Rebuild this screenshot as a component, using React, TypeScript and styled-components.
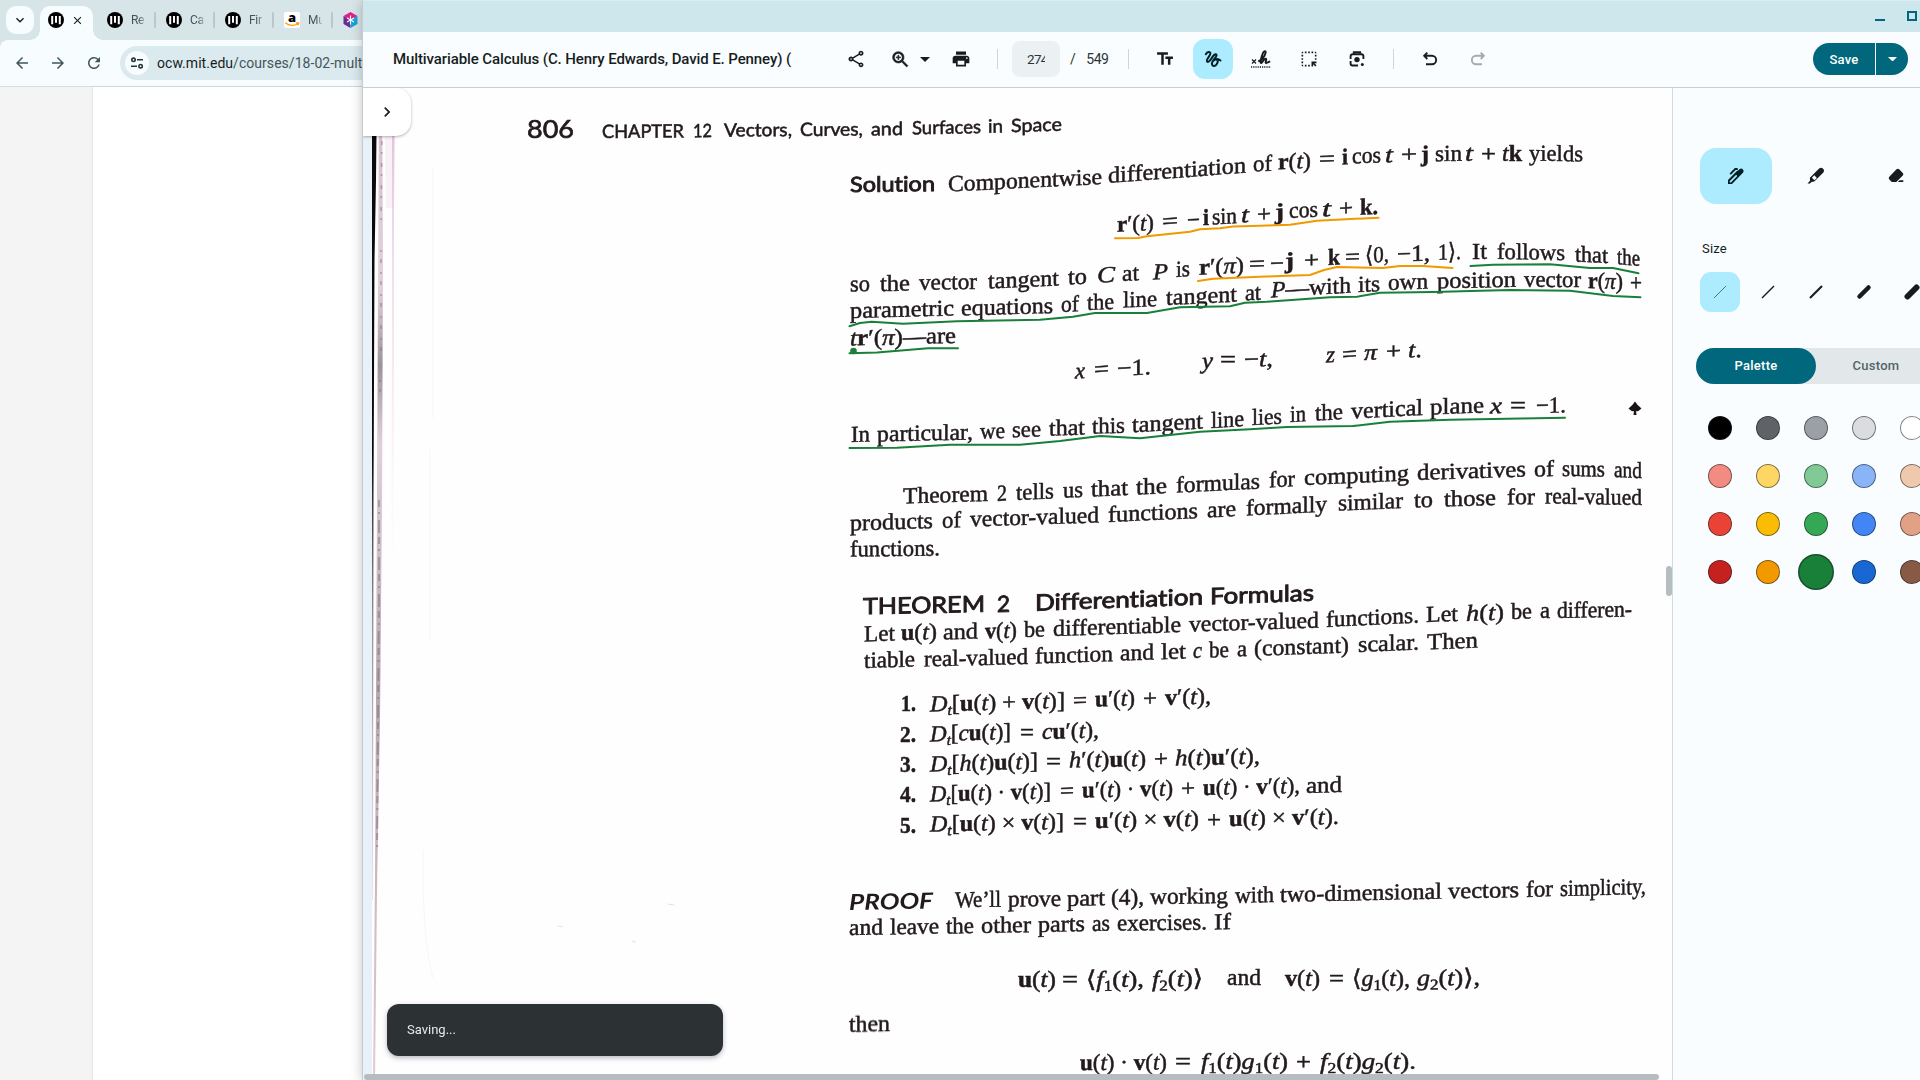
import React from 'react';
import styled, { createGlobalStyle } from 'styled-components';
import {
  MdArrowBack, MdArrowForward, MdChevronRight, MdClose, MdHighlightAlt,
  MdKeyboardArrowDown, MdOutlineShare, MdPrint, MdRefresh, MdTextFields, MdZoomIn,
} from 'react-icons/md';

const GlobalStyle = createGlobalStyle`
  * { box-sizing: border-box; }
  body { margin: 0; overflow: hidden; font-family: Roboto, "Liberation Sans", sans-serif; color: #171d1e; }
  button { font: inherit; color: inherit; border: 0; padding: 0; background: none; }
  svg { display: block; flex: none; }
`;

const Desktop = styled.div`
  position: relative;
  width: 1920px;
  height: 1080px;
  overflow: hidden;
`;

/* ---------- browser window ---------- */

const Browser = styled.section`
  display: flex;
  flex-direction: column;
  width: 100%;
  height: 100%;
  background: #d7e4e8;
`;
const TabStrip = styled.div`
  display: flex;
  height: 40px;
  padding: 6px 0 0 6px;
`;
const TabSearch = styled.button`
  display: grid;
  place-items: center;
  width: 28px;
  height: 28px;
  border-radius: 10px;
  background: #f7fcff;
`;
const ActiveTab = styled.div`
  position: relative;
  display: flex;
  align-items: center;
  gap: 7px;
  width: 53px;
  height: 34px;
  margin: 0 14px 0 6px;
  padding: 0 8px 6px;
  border-radius: 10px 10px 0 0;
  background: #f7fcff;
  &::before, &::after {
    content: "";
    position: absolute;
    bottom: 0;
    width: 10px;
    height: 10px;
  }
  &::before { left: -10px; background: radial-gradient(circle at 0 0, transparent 9.5px, #f7fcff 10px); }
  &::after { right: -10px; background: radial-gradient(circle at 100% 0, transparent 9.5px, #f7fcff 10px); }
`;
const Tab = styled.div`
  display: flex;
  align-items: center;
  width: 59px;
  height: 28px;
`;
const TabTitle = styled.span`
  width: 14px;
  margin-left: 8px;
  margin-right: 9px;
  overflow: hidden;
  white-space: nowrap;
  font-size: 12px;
  letter-spacing: -.3px;
  color: #40545b;
  mask-image: linear-gradient(90deg, #000 55%, rgba(0, 0, 0, .25));
`;
const TabDivider = styled.i`
  width: 2px;
  height: 16px;
  border-radius: 1px;
  background: #bac6ca;
`;
const AddressRow = styled.div`
  display: flex;
  align-items: center;
  height: 47px;
  padding-left: 13px;
  gap: 18px;
  color: #40555c;
  background: #f7fcff;
  border-radius: 8px 0 0 0;
  border-bottom: 1px solid #cfe0e6;
`;
const AddressBar = styled.div`
  display: flex;
  align-items: center;
  flex: 1;
  height: 34px;
  margin-left: -1px;
  padding-left: 5px;
  gap: 8px;
  border-radius: 17px;
  background: #dbeaef;
  font-size: 14px;
  letter-spacing: .04px;
  color: #455559;
  b { font-weight: 400; color: #171d1e; }
`;
const SiteInfo = styled.span`
  display: grid;
  place-items: center;
  width: 24px;
  height: 24px;
  border-radius: 50%;
  background: #f7fcff;
`;
const WebPage = styled.div`
  flex: 1;
  display: flex;
  padding-left: 93px;
  background: #f4f4f4;
`;
const WebPageBody = styled.div`
  flex: 1;
  background: #fff;
  box-shadow: 0 0 2px #ccc;
`;

/* ---------- document viewer window ---------- */

const Viewer = styled.section`
  position: absolute;
  inset: 0 0 0 363px;
  display: flex;
  flex-direction: column;
  background: #f9fdff;
  box-shadow: 0 0 0 1px #c4cccf, 0 2px 12px rgba(0, 0, 0, .28);
`;
const TitleBar = styled.header`
  display: flex;
  justify-content: flex-end;
  align-items: flex-start;
  gap: 22px;
  height: 32px;
  padding: 10px 3px 0 0;
  border-top: 1px solid #dcebf0;
  background: #cee7ed;
`;
const Minimize = styled.i`
  width: 10px;
  height: 2px;
  margin-top: 8px;
  background: #00677c;
`;
const Maximize = styled.i`
  width: 10px;
  height: 10px;
  border: 2px solid #00677c;
`;
const Toolbar = styled.div`
  display: flex;
  align-items: center;
  height: 56px;
  padding: 0 12px 1px 30px;
  border-bottom: 1px solid #c5d0d4;
`;
const FileName = styled.h1`
  width: 403px;
  margin: 0 40px 0 0;
  white-space: nowrap;
  font: 500 15px Roboto, sans-serif;
  letter-spacing: -.105px;
`;
const Tool = styled.button<{ $active?: boolean; $muted?: boolean; $width?: number }>`
  display: flex;
  justify-content: center;
  align-items: center;
  width: ${p => p.$width ?? 40}px;
  height: 40px;
  border-radius: 12px;
  background: ${p => (p.$active ? '#adebff' : 'transparent')};
  color: ${p => (p.$muted ? '#a4abad' : '#171d1e')};
`;
const ZoomTool = styled(Tool)`
  gap: 9px;
  padding-left: 3px;
  svg:first-child path:not([fill="none"]) { stroke: currentColor; stroke-width: .7px; }
`;
const ToolGroup = styled.div<{ $left: number }>`
  display: flex;
  align-items: center;
  gap: 8px;
  margin-left: ${p => p.$left}px;
`;
const Divider = styled.i<{ $left: number }>`
  width: 1px;
  height: 20px;
  margin-left: ${p => p.$left}px;
  background: #ccd6da;
`;
const PageField = styled.div`
  width: 48px;
  height: 36px;
  margin-left: 14px;
  padding: 0 15px;
  border-radius: 8px;
  background: #ebf0f2;
  font-size: 13.5px;
  line-height: 36px;
  letter-spacing: -.7px;
  color: #2c3436;
  span { display: block; overflow: hidden; }
`;
const PageTotal = styled.div`
  display: flex;
  gap: 11px;
  width: 39px;
  margin-left: 10px;
  font-size: 14px;
  letter-spacing: -.5px;
  color: #2c3436;
`;
const SaveGroup = styled.div`
  display: flex;
  gap: 1px;
  height: 32px;
  margin-left: auto;
`;
const SaveButton = styled.button<{ $menu?: boolean }>`
  display: grid;
  place-items: center;
  width: ${p => (p.$menu ? 32 : 62)}px;
  border-radius: ${p => (p.$menu ? '0 16px 16px 0' : '16px 0 0 16px')};
  background: #00677c;
  color: #fff;
  font-size: 13px;
  font-weight: 500;
  letter-spacing: .2px;
`;
const Workspace = styled.div`
  flex: 1;
  display: flex;
  min-height: 0;
  overflow: hidden;
`;
const Canvas = styled.main`
  position: relative;
  flex: none;
  width: 1309px;
  padding-left: 9px;
  overflow: hidden;
  background: #e7f1f7;
`;
const ExpandTab = styled.button`
  position: absolute;
  left: 0;
  top: 0;
  display: grid;
  place-items: center;
  width: 48px;
  height: 48px;
  border-radius: 0 15px 15px 0;
  background: #fff;
  box-shadow: 0 1px 3px rgba(0, 0, 0, .3);
`;
const Toast = styled.div`
  position: absolute;
  left: 24px;
  bottom: 24px;
  width: 336px;
  height: 52px;
  padding-left: 20px;
  border-radius: 12px;
  background: #2c3134;
  box-shadow: 0 2px 5px rgba(60, 50, 80, .35);
  font-size: 13px;
  line-height: 51px;
  color: #e4eaec;
`;
const ScrollThumb = styled.i<{ $vertical?: boolean }>`
  position: absolute;
  ${p => (p.$vertical
    ? 'right: 0; top: 478px; width: 6px; height: 30px;'
    : 'left: 1px; bottom: 0; width: 1295px; height: 6px;')}
  border-radius: 3px;
  background: #b5bdc0;
`;

/* ---------- annotation side panel ---------- */

const Panel = styled.aside`
  width: 272px;
  flex: none;
  padding: 60px 0 0 23px;
  border-left: 1px solid #d0dbdf;
`;
const Row = styled.div`
  display: flex;
  gap: 8px;
  padding-left: 4px;
`;
const PenOption = styled.button<{ $active?: boolean }>`
  display: grid;
  place-items: center;
  flex: none;
  width: 72px;
  height: 56px;
  border-radius: 16px;
  background: ${p => (p.$active ? '#adebff' : 'transparent')};
`;
const PanelLabel = styled.h2`
  margin: 37px 0 15px 6px;
  font: 400 13px/16px Roboto, sans-serif;
  letter-spacing: .2px;
`;
const SizeOption = styled(PenOption)`
  width: 40px;
  height: 40px;
  border-radius: 11px;
`;
const Tabs = styled.div`
  display: flex;
  width: 240px;
  height: 36px;
  margin: 36px 0 32px;
  border-radius: 18px;
  background: #e2e8ea;
`;
const PanelTab = styled.button<{ $active?: boolean }>`
  width: 120px;
  padding-bottom: 1px;
  border-radius: 18px;
  background: ${p => (p.$active ? '#00677c' : 'transparent')};
  color: ${p => (p.$active ? '#fff' : '#536469')};
  font-size: 13px;
  font-weight: 500;
  letter-spacing: .25px;
`;
const Swatches = styled.div`
  display: grid;
  grid-template-columns: repeat(5, 24px);
  grid-auto-rows: 24px;
  gap: 24px;
  padding-left: 12px;
`;
const Swatch = styled.button<{ $color: string; $active?: boolean }>`
  border-radius: 50%;
  border: 1px solid rgba(30, 35, 40, .55);
  background: ${p => p.$color};
  background-clip: border-box;
  transform: ${p => (p.$active ? 'scale(1.5)' : 'none')};
`;

/* ---------- icons ---------- */

const MitIcon = () => (
  <svg width="16" height="16" viewBox="0 0 16 16">
    <circle cx="8" cy="8" r="8" fill="#000" />
    <path d="M4.200 4v8.200M8 4v6.800M11.800 4v8.200" stroke="#fff" strokeWidth="2" />
  </svg>
);
const ShopIcon = () => (
  <svg width="16" height="16" viewBox="0 0 16 16">
    <rect width="16" height="16" rx="2" fill="#fff" />
    <text x="8" y="10" textAnchor="middle" fontFamily="Open Sans" fontWeight="800" fontSize="13">a</text>
    <path d="M1.300 10.800c4 3.400 9 3.300 12.300 1M12 10.800h2.700l-.8 2.500" fill="none" stroke="#f90" strokeWidth="1.300" />
  </svg>
);
const CubeIcon = () => (
  <svg width="15" height="16" viewBox="0 0 15 16">
    <path d="M7.500 0 14.500 4 7.500 8 .5 4z" fill="#e0218a" />
    <path d="M.5 4 7.500 8v8L.5 12z" fill="#6a2c91" />
    <path d="M14.500 4 7.500 8v8l7-4z" fill="#12a5d8" />
    <path d="M7.500 3.500v9M4 6l7 4M11 6l-7 4" stroke="#fff" strokeWidth="1.100" />
  </svg>
);
const TuneIcon = () => (
  <svg width="14" height="14" viewBox="0 0 14 14" fill="none" stroke="#26363b" strokeWidth="1.600">
    <circle cx="3.500" cy="3.800" r="1.700" /><path d="M7 3.800h6M1 10.200h6" /><circle cx="10.600" cy="10.200" r="1.700" />
  </svg>
);
const InkIcon = () => (
  <svg width="20" height="20" viewBox="0 0 20 20" fill="none" stroke="#001f27" strokeWidth="2" strokeLinecap="round" strokeLinejoin="round">
    <path d="M2.800 5.200C4.300 2.800 7.300 2.200 7.400 4.400 7.500 6.700 3.600 9.300 3.900 11.900c.3 2.400 3.200.2 4.900-2.800C10.200 6.500 12.600 4.200 13.500 5.700c1 1.900-4.900 6-4.600 9.200.2 2.500 3 2.700 4.500.8 1.400-1.800 1.600-4 .9-5.400M10.300 11.700c2.300-1.800 5.400-1.700 7.200-.2" />
  </svg>
);
const SignatureIcon = () => (
  <svg width="22" height="20" viewBox="0 0 22 20" fill="none" stroke="#171d1e">
    <path d="M2 10.500l4 4m0-4-4 4" strokeWidth="1.200" />
    <path d="M8.300 12.500c3.500-1.300 6.700-5.500 7.300-8.900.4-2.100-1.700-1.900-2.600.4-1 2.500-2.400 6.500-2.300 9.200.1 1.600 1.200.3 2-.8 1-1.500 2.500-3.200 3.400-2.500.9.800-1.300 3.300-.3 3.900 1.100.5 2.500-.7 4.400-1.400" strokeWidth="2" />
    <path d="M1 18h20" strokeWidth="1.500" strokeDasharray="1.200 1" />
  </svg>
);
const LensIcon = () => (
  <svg width="20" height="20" viewBox="0 0 20 20" fill="none" stroke="#171d1e" strokeWidth="1.900">
    <path d="M3.600 10V7.200a2 2 0 0 1 2-2h8.800a2 2 0 0 1 2 2V10M3.600 12v2.500a2 2 0 0 0 2 2H11" />
    <path d="M6.800 4.800V3.300h6.400v1.500" /><circle cx="10" cy="10.600" r="2.700" fill="#171d1e" stroke="none" />
    <circle cx="15.300" cy="15.500" r="1.500" fill="#171d1e" stroke="none" />
  </svg>
);
const UndoIcon = ({ flip = false }: { flip?: boolean }) => (
  <svg width="20" height="20" viewBox="0 0 20 20" fill="none" stroke="currentColor" strokeWidth="1.900" transform={flip ? 'scale(-1 1)' : undefined}>
    <path d="M7.300 3.600 4.200 6.800l3.100 3.200M4.700 6.800h7.200a4.200 4.200 0 0 1 0 8.500H6" />
  </svg>
);
const Caret = () => <svg width="10" height="5" viewBox="0 0 10 5"><path d="M0 0h10L5 5z" fill="currentColor" /></svg>;
const SmallCaret = () => <svg width="9" height="4.500" viewBox="0 0 10 5"><path d="M0 0h10L5 5z" fill="currentColor" /></svg>;
const PenIcon = () => (
  <svg width="18" height="18" viewBox="0 0 18 18">
    <path d="M1 17v-4L10.200 3.800l.9-.2 1.700-1.700a2.600 2.600 0 0 1 3.400 3.700L5 17z" fill="#001f27" />
    <path d="M3.200 7.200 8.300 2h2.400" fill="none" stroke="#001f27" strokeWidth="1.800" />
    <path d="m3 15.100 6.700-6.800" stroke="#adebff" strokeWidth="1.700" />
  </svg>
);
const MarkerIcon = () => (
  <svg width="18" height="18" viewBox="0 0 18 18">
    <path d="M.5 16.500 3 13.700l-.1-3L10.600 3l1.900-1.700c1.200-.9 2.500-.6 3.600.5s1.200 2.500.3 3.600L7.300 14.600l-3 .3-1.200 1.600z" fill="#171d1e" />
    <path d="m7.300 8.300 2.600 2.600-2.400 2.300-2.600-2.500z" fill="#f9fdff" />
  </svg>
);
const EraserIcon = () => (
  <svg width="18" height="18" viewBox="0 0 18 18">
    <path d="M9.500 2.300a2 2 0 0 1 2.700 0l3.600 3.600a2 2 0 0 1 0 2.700L9.300 15H4.800l-2.500-2.500a2 2 0 0 1 0-2.700zM10.800 15l1.900-1.800h3.600V15z" fill="#171d1e" />
  </svg>
);

/* ---------- scanned page ---------- */

type Run = [x1: number, y1: number, x2: number, y2: number, text: string];

const headings: Run[] = [
  [602, 138, 684, 137.400, 'CHAPTER'], [693, 137.500, 712, 137, '12'], [724, 136.700, 792, 136, 'Vectors,'],
  [800, 136, 863, 135.500, 'Curves,'], [871, 135.500, 903, 135, 'and'], [912, 134.500, 981, 133.200, 'Surfaces'],
  [988, 132.800, 1003, 132.300, 'in'], [1011, 132.300, 1062, 130.700, 'Space'],
];
const boldHeadings: Run[] = [
  [863, 614.300, 985, 611.800, 'THEOREM'], [997, 612, 1010, 611.700, '2'], [1035, 610.700, 1203, 604.500, 'Differentiation'], [1210, 604.300, 1314, 600.500, 'Formulas'],
];

/* Markup in the runs: *bold*, _italic_, ~subscript~ */
const body: Run[] = [
  [948, 191.500, 1102, 184, 'Componentwise'], [1108, 183, 1246, 172.500, 'differentiation'], [1253, 171.500, 1272, 170.500, 'of'],
  [1278, 169.300, 1311, 168, '*r*(_t_)'], [1319, 166.500, 1335, 166, '='], [1342, 164.500, 1348, 164.300, '*i*'], [1352, 163.500, 1381, 162.300, 'cos'], [1385, 162.500, 1393, 162, '_t_'],
  [1401, 162, 1417, 161.500, '+'], [1421, 161.500, 1429, 161.300, '*j*'], [1435, 161.300, 1462, 160.700, 'sin'], [1465, 160.700, 1473, 160.500, '_t_'],
  [1481, 160.500, 1496, 160.500, '+'], [1502, 160.500, 1522, 160.500, '_t_*k*'], [1529, 160.500, 1583, 161.500, 'yields'],

  [1117, 231.700, 1154, 230, '*r*′(_t_)'], [1162, 229, 1178, 228, '='], [1187, 227.500, 1200, 227, '−'], [1203, 225, 1209, 225, '*i*'], [1212, 224.500, 1237, 223, 'sin'], [1241, 222.500, 1249, 222, '_t_'],
  [1257, 222, 1271, 221, '+'], [1275, 219.500, 1284, 219, '*j*'], [1289, 218, 1318, 216.500, 'cos'], [1322, 216.500, 1331, 216, '_t_'], [1339, 216, 1353, 215, '+'], [1360, 214.700, 1378, 214, '*k.*'],

  [850, 291.500, 870, 291, 'so'], [880, 291, 910, 290.500, 'the'], [919, 290, 977, 288.800, 'vector'], [988, 288.500, 1059, 285.500, 'tangent'], [1068, 284.500, 1087, 283.500, 'to'],
  [1097, 282.500, 1115, 282, '_C_'], [1122, 281, 1139, 280, 'at'], [1153, 279.500, 1168, 279, '_P_'], [1176, 277, 1190, 276, 'is'],
  [1199, 274.700, 1244, 272.500, '*r*′(_π_)'], [1249, 271.500, 1265, 271, '='], [1270, 271, 1284, 270.500, '−'], [1285, 268.500, 1294, 268, '*j*'], [1304, 268, 1319, 267, '+'], [1328, 265, 1340, 264.500, '*k*'],
  [1345, 264.500, 1360, 264, '='], [1365, 263, 1389, 261.500, '⟨0,'], [1397, 261.500, 1430, 260.500, '−1,'], [1438, 259.700, 1461, 259, '1⟩.'],
  [1472, 258.700, 1487, 258.700, 'It'], [1497, 258.700, 1565, 260.300, 'follows'], [1575, 261.500, 1608, 263, 'that'], [1617, 264, 1640, 266, 'the'],

  [850, 318, 954, 315.500, 'parametric'], [961, 315.500, 1053, 313, 'equations'], [1061, 312, 1079, 311, 'of'], [1087, 310, 1114, 309, 'the'], [1123, 307.500, 1157, 306, 'line'],
  [1166, 305, 1237, 301.500, 'tangent'], [1245, 300.500, 1261, 299.500, 'at'], [1271, 297.500, 1351, 292.500, '_P_—with'], [1358, 292, 1380, 291, 'its'], [1388, 290, 1428, 288.500, 'own'],
  [1437, 288.300, 1516, 286.800, 'position'], [1524, 286.800, 1581, 287, 'vector'], [1588, 288, 1623, 289, '*r*(_π_)'], [1630, 290, 1642, 290, '+'],
  [850, 345.500, 903, 344.500, '_t_*r*′(_π_)'], [903, 344.500, 926, 343.500, '—'], [926, 343.500, 956, 343, 'are'],

  [1075, 378.500, 1085, 378, '_x_'], [1094, 377, 1109, 376, '='], [1117, 376, 1151, 374, '−1.'],
  [1202, 368.500, 1213, 368, '_y_'], [1220, 367, 1236, 367, '='], [1244, 367, 1273, 366, '−_t_,'],
  [1326, 362.500, 1335, 362, '_z_'], [1342, 362, 1357, 361, '='], [1364, 360, 1377, 359.500, '_π_'], [1386, 359, 1401, 358, '+'], [1408, 357.500, 1422, 357, '_t_.'],

  [851, 442, 870, 441.500, 'In'], [877, 441.500, 973, 439.500, 'particular,'], [980, 438.700, 1005, 438, 'we'], [1012, 437.300, 1041, 436.300, 'see'], [1049, 435.800, 1085, 434.500, 'that'],
  [1092, 433.800, 1125, 432.600, 'this'], [1132, 432.300, 1203, 428.500, 'tangent'], [1211, 428, 1244, 426, 'line'], [1252, 425, 1282, 423.500, 'lies'], [1290, 422, 1306, 421, 'in'],
  [1315, 420.500, 1343, 419, 'the'], [1351, 418.500, 1423, 415, 'vertical'], [1430, 414.500, 1484, 412.500, 'plane'], [1490, 413.500, 1502, 413, '_x_'], [1510, 413, 1526, 413, '='], [1536, 413, 1566, 412.500, '−1.'],

  [903, 503.500, 988, 501, 'Theorem'], [997, 501, 1007, 500.500, '2'], [1016, 500, 1054, 498.500, 'tells'], [1063, 497.800, 1083, 497, 'us'], [1091, 496.500, 1128, 495, 'that'],
  [1136, 494.500, 1167, 493, 'the'], [1176, 492.500, 1260, 488.500, 'formulas'], [1269, 487.500, 1295, 486, 'for'], [1304, 485, 1409, 480.500, 'computing'],
  [1417, 480, 1526, 476.500, 'derivatives'], [1534, 476.500, 1554, 476, 'of'], [1562, 476, 1605, 476.500, 'sums'], [1614, 477, 1642, 478, 'and'],
  [850, 530.500, 933, 528, 'products'], [942, 528, 961, 527, 'of'], [970, 526.500, 1099, 522.500, 'vector-valued'], [1108, 522, 1198, 518, 'functions'], [1207, 517.500, 1236, 516, 'are'],
  [1246, 515.500, 1327, 511.500, 'formally'], [1338, 510.500, 1403, 508, 'similar'], [1414, 507.500, 1433, 507, 'to'], [1444, 506.500, 1496, 505, 'those'], [1507, 504.500, 1535, 504, 'for'], [1545, 503.500, 1642, 505, 'real-valued'],
  [850, 556.500, 940, 555.500, 'functions.'],

  [864, 641.500, 895, 640.500, 'Let'], [901, 640, 937, 639, '*u*(_t_)'], [943, 639.500, 978, 638.500, 'and'], [985, 638.500, 1017, 637.500, '*v*(_t_)'], [1024, 637, 1045, 636.500, 'be'],
  [1053, 636, 1181, 632, 'differentiable'], [1189, 631.700, 1319, 627.500, 'vector-valued'], [1326, 627, 1419, 622.500, 'functions.'], [1426, 622, 1458, 621, 'Let'], [1466, 621, 1504, 619.500, '_h_(_t_)'],
  [1511, 619, 1532, 618.500, 'be'], [1540, 618, 1550, 618, 'a'], [1557, 618, 1632, 616.500, 'differen-'],
  [864, 668, 915, 666.500, 'tiable'], [924, 666.500, 1028, 664, 'real-valued'], [1035, 663.500, 1113, 661, 'function'], [1120, 660.500, 1154, 659.500, 'and'], [1161, 659.300, 1186, 658.500, 'let'],
  [1193, 658, 1202, 658, '_c_'], [1209, 657.500, 1229, 657, 'be'], [1237, 656.500, 1247, 656, 'a'], [1254, 655.800, 1349, 652.500, '(constant)'], [1358, 652, 1419, 649.500, 'scalar.'], [1427, 649.500, 1478, 647.500, 'Then'],

  [901, 711, 916, 711, '*1.*'], [930, 711.500, 1065, 708, '_D_~t~[*u*(_t_) + *v*(_t_)]'], [1073, 708, 1087, 707.500, '='], [1095, 706.500, 1135, 705.500, '*u*′(_t_)'], [1143, 706, 1157, 705.500, '+'], [1165, 705, 1211, 703.500, '*v*′(_t_),'],
  [900, 741.500, 916, 741.500, '*2.*'], [930, 741.500, 1011, 739, '_D_~t~[_c_*u*(_t_)]'], [1020, 739.500, 1034, 739.500, '='], [1042, 739, 1099, 737.500, '_c_*u*′(_t_),'],
  [900, 772, 916, 772, '*3.*'], [930, 771.500, 1038, 768.500, '_D_~t~[_h_(_t_)*u*(_t_)]'], [1046, 768.500, 1061, 768.500, '='], [1069, 767.500, 1146, 766, '_h_′(_t_)*u*(_t_)'], [1154, 766.500, 1168, 766, '+'], [1175, 765.500, 1260, 763.500, '_h_(_t_)*u*′(_t_),'],
  [900, 802, 916, 802, '*4.*'], [930, 801.500, 1051, 798.500, '_D_~t~[*u*(_t_) · *v*(_t_)]'], [1060, 798.500, 1074, 798, '='], [1082, 797.500, 1173, 795.500, '*u*′(_t_) · *v*(_t_)'], [1181, 796, 1195, 795.500, '+'], [1203, 795, 1300, 793, '*u*(_t_) · *v*′(_t_),'], [1306, 793, 1342, 792, 'and'],
  [900, 832.500, 916, 832.500, '*5.*'], [930, 831.500, 1064, 829, '_D_~t~[*u*(_t_) × *v*(_t_)]'], [1073, 829, 1087, 829, '='], [1095, 828, 1199, 826, '*u*′(_t_) × *v*(_t_)'], [1207, 826.500, 1221, 826.500, '+'], [1229, 826, 1339, 824, '*u*(_t_) × *v*′(_t_).'],

  [955, 907.500, 1001, 906.500, 'We’ll'], [1008, 906.500, 1061, 906, 'prove'], [1067, 906, 1105, 905, 'part'], [1111, 905, 1144, 904.500, '(4),'], [1150, 904, 1228, 903, 'working'], [1235, 903, 1274, 902, 'with'],
  [1280, 902, 1442, 898.500, 'two-dimensional'], [1448, 898.500, 1519, 897, 'vectors'], [1526, 897, 1553, 896, 'for'], [1560, 896, 1646, 894, 'simplicity,'],
  [849, 935, 883, 934.500, 'and'], [890, 934.500, 939, 933.500, 'leave'], [946, 933.500, 974, 933, 'the'], [981, 933, 1031, 932, 'other'], [1038, 932, 1085, 931, 'parts'], [1092, 931, 1110, 930.500, 'as'], [1117, 930.500, 1207, 929.500, 'exercises.'], [1214, 929.500, 1231, 929, 'If'],

  [1018, 987, 1056, 987, '*u*(_t_)'], [1062, 987, 1078, 987, '='], [1086, 987, 1144, 986.500, '⟨_f_~1~(_t_),'], [1152, 986.500, 1203, 986, '_f_~2~(_t_)⟩'], [1227, 984.500, 1261, 984.500, 'and'],
  [1285, 985.500, 1320, 985.500, '*v*(_t_)'], [1329, 985.500, 1344, 985.500, '='], [1352, 985.500, 1410, 985.500, '⟨_g_~1~(_t_),'], [1417, 985.500, 1480, 985, '_g_~2~(_t_)⟩,'],
  [849, 1032, 890, 1031, 'then'],
  [1080, 1070, 1167, 1069.500, '*u*(_t_) · *v*(_t_)'], [1175, 1069, 1191, 1069, '='], [1201, 1069, 1288, 1069, '_f_~1~(_t_)_g_~1~(_t_)'], [1296, 1069, 1311, 1069, '+'], [1320, 1069, 1416, 1069, '_f_~2~(_t_)_g_~2~(_t_).'],
];

const ScanSheet = styled.svg`
  background: #fefefe;
  .ink { fill: none; stroke-width: 2; stroke-linecap: round; stroke-linejoin: round; }
`;
const Print = styled.g<{ $size: number; $family?: string; $weight?: number; $style?: string; $thick?: number }>`
  font-family: ${p => p.$family ?? '"Liberation Serif", "DejaVu Sans", serif'};
  font-size: ${p => p.$size}px;
  font-weight: ${p => p.$weight ?? 400};
  font-style: ${p => p.$style ?? 'normal'};
  font-variant-ligatures: none;
  fill: #221a1d;
  stroke: #221a1d;
  stroke-width: ${p => p.$thick ?? 0.5}px;
  filter: blur(.4px);
`;
const PaperEdge = styled.g`
  filter: blur(.6px);
`;

function styledPieces(source: string) {
  let lowered = false;
  return source.split(/(\*[^*]+\*|_[^_]+_|~[^~]+~)/).filter(Boolean).map((piece, i) => {
    const inner = piece.slice(1, -1);
    const dy = lowered ? -4 : undefined;
    lowered = false;
    if (piece[0] === '*') return <tspan key={i} dy={dy} fontWeight="700">{inner}</tspan>;
    if (piece[0] === '_' && piece.length > 2) return <tspan key={i} dy={dy} fontStyle="italic">{inner}</tspan>;
    if (piece[0] === '~') {
      lowered = true;
      return <tspan key={i} dy={4} fontSize="15" fontStyle={inner === 't' ? 'italic' : undefined}>{inner}</tspan>;
    }
    return <tspan key={i} dy={dy}>{piece}</tspan>;
  });
}

const Runs = ({ runs }: { runs: Run[] }) => (
  <>
    {runs.map(([x1, y1, x2, y2, text], i) => {
      const angle = (Math.atan2(y2 - y1, x2 - x1) * 180) / Math.PI;
      return (
        <text key={i} transform={`translate(${x1} ${y1}) skewY(${angle})`} textLength={x2 - x1} lengthAdjust="spacingAndGlyphs">
          {styledPieces(text)}
        </text>
      );
    })}
  </>
);

const ScannedPage = () => (
  <ScanSheet width="1300" height="992" viewBox="372 88 1300 992">
    <defs>
      <linearGradient id="edgeFade" x1="0" y1="0" x2="0" y2="1">
        <stop offset="0" stopColor="#c9a6bb" stopOpacity=".75" /><stop offset=".2" stopColor="#c3a4b4" stopOpacity=".5" />
        <stop offset=".28" stopColor="#5a4a52" stopOpacity=".6" /><stop offset=".36" stopColor="#c3a0b0" stopOpacity=".5" />
        <stop offset=".6" stopColor="#80606f" stopOpacity=".55" /><stop offset="1" stopColor="#d0a5b8" stopOpacity=".6" />
      </linearGradient>
      <linearGradient id="outerFade" x1="0" y1="0" x2="0" y2="1">
        <stop offset="0" stopColor="#dbaed0" stopOpacity=".8" /><stop offset=".5" stopColor="#edc9e4" stopOpacity=".4" /><stop offset="1" stopColor="#fff" stopOpacity="0" />
      </linearGradient>
      <linearGradient id="spineFade" x1="0" y1="88" x2="0" y2="900" gradientUnits="userSpaceOnUse">
        <stop offset="0" stopColor="#0b090a" /><stop offset=".45" stopColor="#0b090a" /><stop offset=".65" stopColor="#4f4048" stopOpacity=".6" /><stop offset="1" stopColor="#8a6676" stopOpacity=".15" />
      </linearGradient>
    </defs>
    <PaperEdge>
      <path d="M372 88H377L376 180 374.500 260 373.500 500 373 900H372z" fill="url(#spineFade)" />
      <path d="M379 88h3l1 180-1 230-2 220-3 170-2 192h-2l2-200 1-180 1-200z" fill="url(#edgeFade)" />
      <path d="M384 88h10l-1 120H386z" fill="#f3e7f1" opacity=".55" />
      <path d="M392 88h3l-1 120v230l-2 200h-1l1-300z" fill="url(#outerFade)" />
      <path d="M381 220l1-90M381 250v110M380 380v12" stroke="#86606f" strokeWidth="1.500" strokeDasharray="2 7 4 9" opacity=".5" />
      <path d="M379 500v100l-1 130-1 120" fill="none" stroke="#695866" strokeWidth="2" strokeDasharray="7 5 2 6 13 4" opacity=".4" />
      <path d="M423 850q-1 90 10 128M433 168v250M430 450v190" fill="none" stroke="#f7f5f7" />
      <path d="M668 904l6 1M558 926l5 1M632 941l4 1" stroke="#e4dfe2" />
    </PaperEdge>
    <Print $size={25.500} $family="Lato, sans-serif" $thick={0.700}>
      <text x="527" y="138" textLength="47" lengthAdjust="spacingAndGlyphs">806</text>
    </Print>
    <Print $size={18.500} $family="Lato, sans-serif" $thick={0.550}><Runs runs={headings} /></Print>
    <Print $size={21} $family="Lato, sans-serif" $thick={0.900}>
      <Runs runs={[[850, 192, 935, 191, 'Solution']]} />
    </Print>
    <Print $size={22.500} $family="Lato, sans-serif" $thick={0.900}><Runs runs={boldHeadings} /></Print>
    <Print $size={22} $family="Lato, sans-serif" $weight={700} $style="italic" $thick={0}>
      <Runs runs={[[849, 910, 933, 908.500, 'PROOF']]} />
    </Print>
    <Print $size={23}><Runs runs={body} /></Print>
    <path d="M1635 401.500q2.500 4 6.500 7-3.500 3.500-5.500 2.500l.5 4h-3l.5-4q-2 1-5.500-2.500 4-3 6.500-7z" fill="#1a1416" />
    <g className="ink" stroke="#f29900">
      <path d="M1115 238.300 1138 238 1147 236.300 1190 231.700 1200 229.300 1220 228.300 1233 226.500 1260 225.800 1290 224.700 1317 220.700 1378.500 217.700" />
      <path d="M1198 281 1213 278.700 1260 276.700 1310 275 1324 270 1337 267 1383 268 1400 266 1423 266 1452.500 268" />
    </g>
    <g className="ink" stroke="#188038">
      <path d="M1470.500 266 1493 264.700 1550 264.300 1590 268 1613 268 1638.500 273.300" />
      <path d="M849.500 326.300 860 323 871.700 321.700 903 323.700 957 321.300 1040 319.700 1073 316.700 1095 313 1147 313 1180 307.300 1230 306.300 1245 302.700 1267 301.700 1330 297.300 1357 296.700 1380 292.700 1433 292 1510 290 1570 290.700 1613 296 1640.500 297.300" />
      <path d="M849.500 353.300 877 352.500 928 348.300 958 348.300" />
      <path d="M849.500 448 897 447.700 950 444.700 1020 444.700 1060 441 1100 436 1140 438.300 1200 431.700 1250 429.300 1287 427 1353 426 1390 421.700 1450 419.700 1565 417.700" />
    </g>
    <circle cx="853.500" cy="351" r="3.300" fill="#188038" />
  </ScanSheet>
);

/* ---------- data ---------- */

const tabs = [
  { icon: <MitIcon />, title: 'Re' }, { icon: <MitIcon />, title: 'Ca' }, { icon: <MitIcon />, title: 'Fir' }, { icon: <ShopIcon />, title: 'Mu' },
];
const strokeSizes = [0.900, 1.500, 2.200, 4.500, 6];
const swatches = [
  '#000000', '#5f6368', '#9aa0a6', '#dadce0', '#ffffff',
  '#f28b82', '#fdd663', '#81c995', '#8ab4f8', '#eec9ae',
  '#ea4335', '#fbbc04', '#34a853', '#4285f4', '#e2a185',
  '#c5221f', '#f29900', '#188038', '#1967d2', '#885945',
];

export default function App() {
  return (
    <Desktop>
      <GlobalStyle />
      <Browser>
        <TabStrip>
          <TabSearch><MdKeyboardArrowDown size={16} /></TabSearch>
          <ActiveTab><MitIcon /><MdClose size={13} /></ActiveTab>
          {tabs.map(tab => (
            <Tab key={tab.title}>{tab.icon}<TabTitle>{tab.title}</TabTitle><TabDivider /></Tab>
          ))}
          <Tab><CubeIcon /></Tab>
        </TabStrip>
        <AddressRow>
          <MdArrowBack size={18} /><MdArrowForward size={18} /><MdRefresh size={18} />
          <AddressBar><SiteInfo><TuneIcon /></SiteInfo><span><b>ocw.mit.edu</b>/courses/18-02-mult</span></AddressBar>
        </AddressRow>
        <WebPage><WebPageBody /></WebPage>
      </Browser>

      <Viewer>
        <TitleBar><Minimize /><Maximize /></TitleBar>
        <Toolbar>
          <FileName>Multivariable Calculus (C. Henry Edwards, David E. Penney) (</FileName>
          <Tool><MdOutlineShare size={20} /></Tool>
          <ZoomTool $width={65}><MdZoomIn size={21} /><Caret /></ZoomTool>
          <Tool><MdPrint size={20} /></Tool>
          <Divider $left={16} />
          <PageField><span>274</span></PageField>
          <PageTotal><span>/</span><span>549</span></PageTotal>
          <Divider $left={19} />
          <ToolGroup $left={16}>
            <Tool><MdTextFields size={20} /></Tool>
            <Tool $active><InkIcon /></Tool>
            <Tool><SignatureIcon /></Tool>
            <Tool><MdHighlightAlt size={20} /></Tool>
            <Tool><LensIcon /></Tool>
          </ToolGroup>
          <Divider $left={16} />
          <ToolGroup $left={16}>
            <Tool><UndoIcon /></Tool>
            <Tool $muted><UndoIcon flip /></Tool>
          </ToolGroup>
          <SaveGroup><SaveButton>Save</SaveButton><SaveButton $menu><SmallCaret /></SaveButton></SaveGroup>
        </Toolbar>
        <Workspace>
          <Canvas>
            <ScannedPage />
            <ScrollThumb $vertical />
            <ScrollThumb />
            <ExpandTab><MdChevronRight size={20} /></ExpandTab>
            <Toast>Saving...</Toast>
          </Canvas>
          <Panel>
            <Row>
              <PenOption $active><PenIcon /></PenOption>
              <PenOption><MarkerIcon /></PenOption>
              <PenOption><EraserIcon /></PenOption>
            </Row>
            <PanelLabel>Size</PanelLabel>
            <Row>
              {strokeSizes.map((w, i) => (
                <SizeOption key={w} $active={i === 0}>
                  <svg width="20" height="20" viewBox="0 0 20 20">
                    <path d={w > 4 ? 'M5.500 14.500l9-9' : 'M4 16 16 4'} stroke={i ? '#171d1e' : '#3f6470'} strokeWidth={w} strokeLinecap={w > 4 ? 'round' : 'butt'} />
                  </svg>
                </SizeOption>
              ))}
            </Row>
            <Tabs><PanelTab $active>Palette</PanelTab><PanelTab>Custom</PanelTab></Tabs>
            <Swatches>
              {swatches.map(color => <Swatch key={color} $color={color} $active={color === '#188038'} />)}
            </Swatches>
          </Panel>
        </Workspace>
      </Viewer>
    </Desktop>
  );
}
